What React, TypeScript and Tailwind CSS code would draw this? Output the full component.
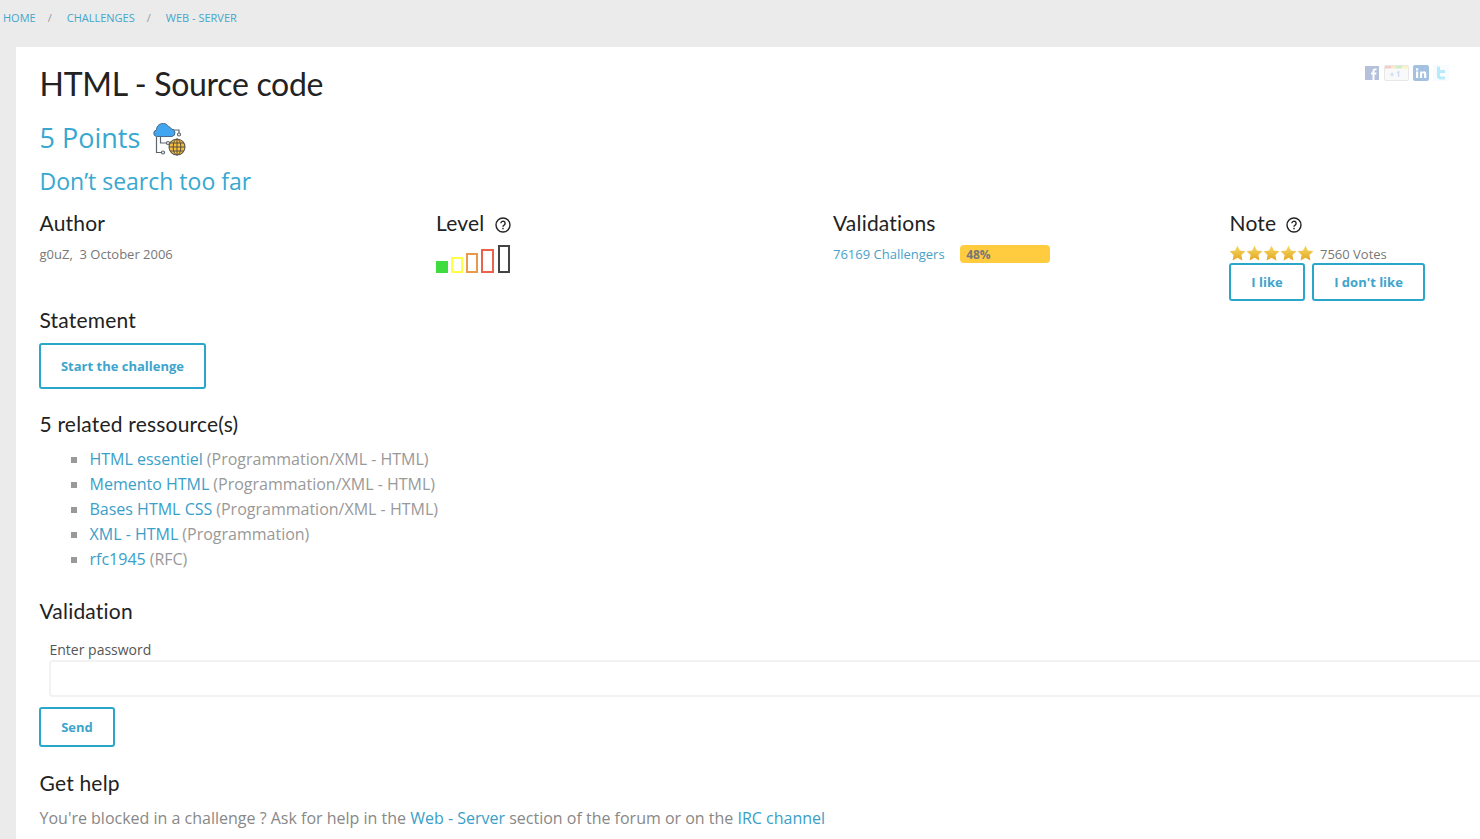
import React from "react";

const heading = "font-['Lato','Noto_Sans',sans-serif] text-[#222222]";
const h3 = `${heading} text-[21px] leading-[30px] tracking-[0.2px]`;

function Help({ className }: { className: string }) {
  return (
    <svg width="16" height="16" viewBox="0 0 16 16" className={className}>
      <circle cx="8" cy="8" r="7" fill="none" stroke="#222" strokeWidth="1.4" />
      <path d="M5.9 6.3a2.1 2.1 0 1 1 3.2 1.8c-.7.4-1.1.8-1.1 1.6" fill="none" stroke="#222" strokeWidth="1.4" />
      <rect x="7.3" y="10.8" width="1.4" height="1.5" fill="#222" />
    </svg>
  );
}

function Star() {
  return (
    <svg width="17" height="16" viewBox="0 0 17 16">
      <defs>
        <linearGradient id="starfill" x1="0" y1="0" x2="0" y2="1">
          <stop offset="0" stopColor="#f7dc6a" />
          <stop offset="1" stopColor="#e3a520" />
        </linearGradient>
      </defs>
      <path d="M8.5.5l2.4 5 5.5.7-4 3.8 1 5.5-4.9-2.7-4.9 2.7 1-5.5-4-3.8 5.5-.7z" fill="url(#starfill)" />
    </svg>
  );
}

function CloudIcon() {
  return (
    <svg width="34" height="34" viewBox="0 0 34 34" className="ml-[13px] mt-[5px]">
      <g fill="none" stroke="#5b6670" strokeWidth="1.2">
        <path d="M3.500 14v15.500h5" />
        <path d="M7.500 14v6h6" />
        <path d="M18 7h8v3" />
        <circle cx="26" cy="11.500" r="1.500" />
        <circle cx="15" cy="20" r="1.500" />
        <circle cx="10" cy="29.500" r="1.500" />
      </g>
      <path d="M3.500 13.500a3.300 3.300 0 0 1 0-6.500 6.500 6.500 0 0 1 12-3.500 5 5 0 0 1 3 2.500 3.800 3.800 0 0 1 .5 7.500z" fill="#42a5f0" stroke="#40607c" strokeWidth=".9" />
      <circle cx="24" cy="24" r="8" fill="#f6bf3c" stroke="#58585a" strokeWidth="1.100" />
      <g fill="none" stroke="#5a5040" strokeWidth="1">
        <ellipse cx="24" cy="24" rx="3.800" ry="8" />
        <path d="M24 16v16M16 24h16M17.200 20h13.600M17.200 28h13.600" />
      </g>
    </svg>
  );
}

function Social() {
  return (
    <div className="absolute right-[31px] top-[18px] flex items-start opacity-50">
      <svg width="14" height="14" viewBox="0 0 14 14" className="mt-[1px]">
        <rect width="14" height="14" fill="#6d83b8" />
        <path d="M9.500 14V8.500h1.700l.3-2H9.500V5.300c0-.6.200-1 1-1h1V2.500h-1.500C8.400 2.500 7.500 3.500 7.500 5v1.500H6v2h1.500V14z" fill="#fff" />
      </svg>
      <svg width="25" height="16" viewBox="0 0 25 16" className="ml-[5px]">
        <rect x=".5" y=".5" width="24" height="15" rx="1.500" fill="#f4f4f4" stroke="#d0d0d0" />
        <rect x="1" y="1" width="6" height="2.500" fill="#ef9a9a" />
        <rect x="7" y="1" width="6" height="2.500" fill="#f5d98a" />
        <rect x="12" y="1" width="6" height="2.500" fill="#9adf9a" />
        <rect x="18" y="1" width="6" height="2.500" fill="#f5ea8a" />
        <path d="M6 9.500h4M8 7.500v4" stroke="#9ab8ee" strokeWidth="1.200" />
        <path d="M13 7.800l1.600-1V12" fill="none" stroke="#9ab8ee" strokeWidth="1.400" />
      </svg>
      <svg width="16" height="16" viewBox="0 0 16 16" className="ml-[4px]">
        <rect width="16" height="16" rx="2" fill="#4b84c4" />
        <rect x="3" y="6.500" width="2.200" height="6.500" fill="#fff" />
        <rect x="3" y="3.300" width="2.200" height="2.200" fill="#fff" />
        <path d="M7 13V6.500h2.100v1c.4-.7 1.100-1.200 2-1.200 1.500 0 2.200 1 2.200 2.700v4h-2.200V9.500c0-.8-.3-1.300-1-1.300-.7 0-1 .6-1 1.300V13z" fill="#fff" />
      </svg>
      <svg width="16" height="16" viewBox="0 0 16 16" className="ml-[4px]">
        <rect width="16" height="16" fill="#f2fbff" />
        <path d="M4 1.500h3V5h5v3H7v2.500c0 .8.500 1 1.200 1H12v3H7.500C5 14.500 4 13 4 11z" fill="#73d9f7" />
      </svg>
    </div>
  );
}

const links = [
  ["HTML essentiel", "(Programmation/XML - HTML)"],
  ["Memento HTML", "(Programmation/XML - HTML)"],
  ["Bases HTML CSS", "(Programmation/XML - HTML)"],
  ["XML - HTML", "(Programmation)"],
  ["rfc1945", "(RFC)"],
];

const btn =
  "border-2 border-[#2ba6cb] rounded-[3px] text-[#3da5cd] font-bold text-[13px] pt-[1px] flex items-center justify-center bg-white";

export default function App() {
  return (
    <div className="h-[839px] overflow-hidden bg-[#ebebeb] font-['Open_Sans',sans-serif]">
      <nav className="h-[47px] flex pl-[3px] pt-[10px] text-[11px] leading-[15px] text-[#45a6cc]">
        <span>HOME</span>
        <span className="ml-[12px] mr-[15px] text-[#999]">/</span>
        <span>CHALLENGES</span>
        <span className="ml-[12px] mr-[15px] text-[#999]">/</span>
        <span>WEB - SERVER</span>
      </nav>
      <main className="relative ml-[16px] h-[792px] bg-white pl-[23.5px] overflow-hidden">
        <Social />
        <h1 className={`${heading} text-[32px] leading-[44px] tracking-[-0.3px] pt-[15px] h-[60px]`}>HTML - Source code</h1>
        <div className="flex items-center h-[35px] mt-[13px]">
          <span className="text-[27px] leading-[35px] text-[#38a8d0]">5 Points</span>
          <CloudIcon />
        </div>
        <div className="text-[23px] leading-[32px] text-[#38a8d0] mt-[10px]">Don’t search too far</div>
        <div className="grid grid-cols-[397px_397px_397px_220px] mt-[11px] h-[97px]">
          <div>
            <h3 className={h3}>Author</h3>
            <p className="text-[13px] leading-[18px] text-[#777] mt-[7px]">g0uZ,&nbsp; 3 October 2006</p>
          </div>
          <div>
            <h3 className={`${h3} flex items-center -ml-[0.5px]`}>
              Level
              <Help className="ml-[11px] mt-[3px]" />
            </h3>
            <div className="flex items-end gap-[3px] mt-[7px] h-[28px] -ml-[0.5px]">
              <div className="w-[12px] h-[12px] bg-[#3fdc3f]" />
              <div className="w-[12px] h-[16px] border-2 border-[#ffff44]" />
              <div className="w-[12px] h-[20px] border-2 border-[#e89a4c]" />
              <div className="w-[13px] h-[24px] border-2 border-[#e8624c]" />
              <div className="w-[12px] h-[28px] border-2 border-[#444] ml-[1px]" />
            </div>
          </div>
          <div>
            <h3 className={`${h3} -ml-[0.5px]`}>Validations</h3>
            <div className="flex items-center mt-[7px]">
              <span className="text-[13px] leading-[18px] text-[#4a9fc8] -ml-[0.5px]">76169 Challengers</span>
              <div className="ml-[15.5px] w-[90px] h-[18px] rounded-[4px] bg-[#ffcc3f] pl-[6px] text-[12px] leading-[19px] font-bold text-[#777]">
                48%
              </div>
            </div>
          </div>
          <div>
            <h3 className={`${h3} flex items-center -ml-[1px]`}>
              Note
              <Help className="ml-[10px] mt-[3px]" />
            </h3>
            <div className="flex items-center mt-[6px] h-[18px] -ml-[1.5px]">
              <Star />
              <Star />
              <Star />
              <Star />
              <Star />
              <span className="text-[13px] leading-[18px] text-[#777] ml-[6px] mt-[2px]">7560 Votes</span>
            </div>
            <div className="flex gap-[7px] mt-[1px] -ml-[1.5px]">
              <div className={`${btn} w-[76px] h-[38px]`}>I like</div>
              <div className={`${btn} w-[113px] h-[38px]`}>I don't like</div>
            </div>
          </div>
        </div>
        <h3 className={h3}>Statement</h3>
        <div className={`${btn} w-[167px] h-[46px] mt-[8px] -ml-[0.5px]`}>Start the challenge</div>
        <h3 className={`${h3} mt-[20px]`}>5 related ressource(s)</h3>
        <ul className="mt-[8px] ml-[31px] text-[16px] leading-[25px] text-[#999]">
          {links.map(([a, b]) => (
            <li key={a} className="flex items-center">
              <span className="w-[6px] h-[6px] bg-[#999] mr-[13px]" />
              <span className="text-[#3aa0c8]">{a}</span>
              <span className="ml-[4px]">{b}</span>
            </li>
          ))}
        </ul>
        <h3 className={`${h3} mt-[24px]`}>Validation</h3>
        <div className="pl-[9.5px] mt-[15px]">
          <label className="block text-[14px] leading-[18px] text-[#555] ml-[0.5px]">Enter password</label>
          <div className="mt-[1px] h-[37px] w-[1500px] rounded-[4px] border-2 border-[#f2f2f2] bg-white" />
        </div>
        <div className={`${btn} w-[76px] h-[40px] mt-[10px] -ml-[0.5px]`}>Send</div>
        <h3 className={`${h3} mt-[21px]`}>Get help</h3>
        <p className="text-[16px] leading-[24px] text-[#888] mt-[8px] whitespace-nowrap">
          You're blocked in a challenge ? Ask for help in the <span className="text-[#3aa0c8]">Web - Server</span> section of the forum or on the <span className="text-[#3aa0c8]">IRC channel</span>
        </p>
      </main>
    </div>
  );
}
